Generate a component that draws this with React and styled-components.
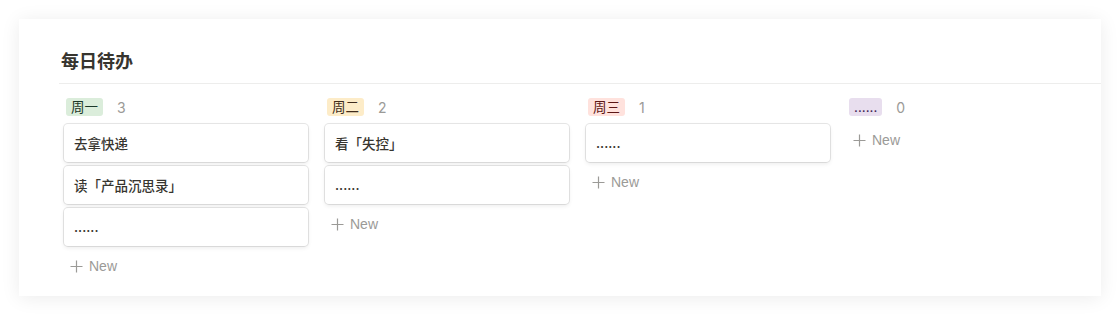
import React from "react";
import styled, { createGlobalStyle } from "styled-components";

const Global = createGlobalStyle`
  html, body { margin: 0; padding: 0; background: #ffffff; }
  body {
    font-family: Inter, "Noto Sans CJK SC", sans-serif;
    color: #37352f;
    -webkit-font-smoothing: antialiased;
  }
`;

const Page = styled.div`
  padding: 19px;
  height: 315px;
  box-sizing: border-box;
`;

const Panel = styled.section`
  background: #fff;
  height: 277px;
  box-sizing: border-box;
  padding: 30px 0 0 40px;
  box-shadow: 0 2px 18px rgba(0, 0, 0, 0.08);
`;

const Title = styled.h1`
  margin: 0;
  padding: 0 0 8px 2px;
  font-size: 18px;
  line-height: 26px;
  font-weight: 700;
  color: #37352f;
  border-bottom: 1px solid #ededec;
`;

const Board = styled.div`
  display: flex;
  gap: 17px;
  padding: 10px 0 0 5px;
`;

const Column = styled.div`
  width: 244px;
  display: flex;
  flex-direction: column;
`;

const Header = styled.div`
  height: 26px;
  display: flex;
  align-items: center;
  padding-left: 2px;
  margin-bottom: 4px;
`;

const Tag = styled.span`
  display: inline-flex;
  align-items: center;
  height: 18px;
  padding: 0 5px;
  border-radius: 3px;
  font-size: 13.5px;
  line-height: 18px;
  background: ${(p) => p.$bg};
  color: ${(p) => p.$fg};
  margin-top: -1px;
`;

const Count = styled.span`
  margin-left: 14px;
  font-size: 14px;
  color: #9b9a97;
`;

const Cards = styled.div`
  display: flex;
  flex-direction: column;
  gap: 4px;
`;

const Card = styled.div`
  height: 38px;
  box-sizing: border-box;
  padding: 0 10px;
  display: flex;
  align-items: center;
  border-radius: 4px;
  background: #fff;
  font-size: 13.5px;
  font-weight: 500;
  color: #37352f;
  box-shadow: rgba(15, 15, 15, 0.1) 0 0 0 1px, rgba(15, 15, 15, 0.08) 0 2px 4px;
`;

const NewRow = styled.div`
  height: 32px;
  display: flex;
  align-items: center;
  gap: 6px;
  padding-left: 6px;
  margin-top: ${(p) => (p.$hasCards ? "4px" : "0")};
  font-family: "Liberation Sans", Inter, sans-serif;
  font-size: 14px;
  color: #9b9a97;
`;

const Plus = () => (
  <svg width="13" height="13" viewBox="0 0 13 13">
    <path d="M6.5 0.5v12M0.5 6.5h12" stroke="#9b9a97" strokeWidth="1.2" fill="none" />
  </svg>
);

const columns = [
  { tag: "周一", bg: "#dbeddb", fg: "#1c3829", items: ["去拿快递", "读「产品沉思录」", "......"] },
  { tag: "周二", bg: "#fdecc8", fg: "#402c1b", items: ["看「失控」", "......"] },
  { tag: "周三", bg: "#ffe2dd", fg: "#5d1715", items: ["......"] },
  { tag: "......", bg: "#e8deee", fg: "#412454", items: [] },
];

export default function App() {
  return (
    <>
      <Global />
      <Page>
        <Panel>
          <Title>每日待办</Title>
          <Board>
            {columns.map((c) => (
              <Column key={c.tag}>
                <Header>
                  <Tag $bg={c.bg} $fg={c.fg}>{c.tag}</Tag>
                  <Count>{c.items.length}</Count>
                </Header>
                {c.items.length > 0 && (
                  <Cards>
                    {c.items.map((t, i) => (
                      <Card key={i}>{t}</Card>
                    ))}
                  </Cards>
                )}
                <NewRow $hasCards={c.items.length > 0}>
                  <Plus />
                  New
                </NewRow>
              </Column>
            ))}
          </Board>
        </Panel>
      </Page>
    </>
  );
}
